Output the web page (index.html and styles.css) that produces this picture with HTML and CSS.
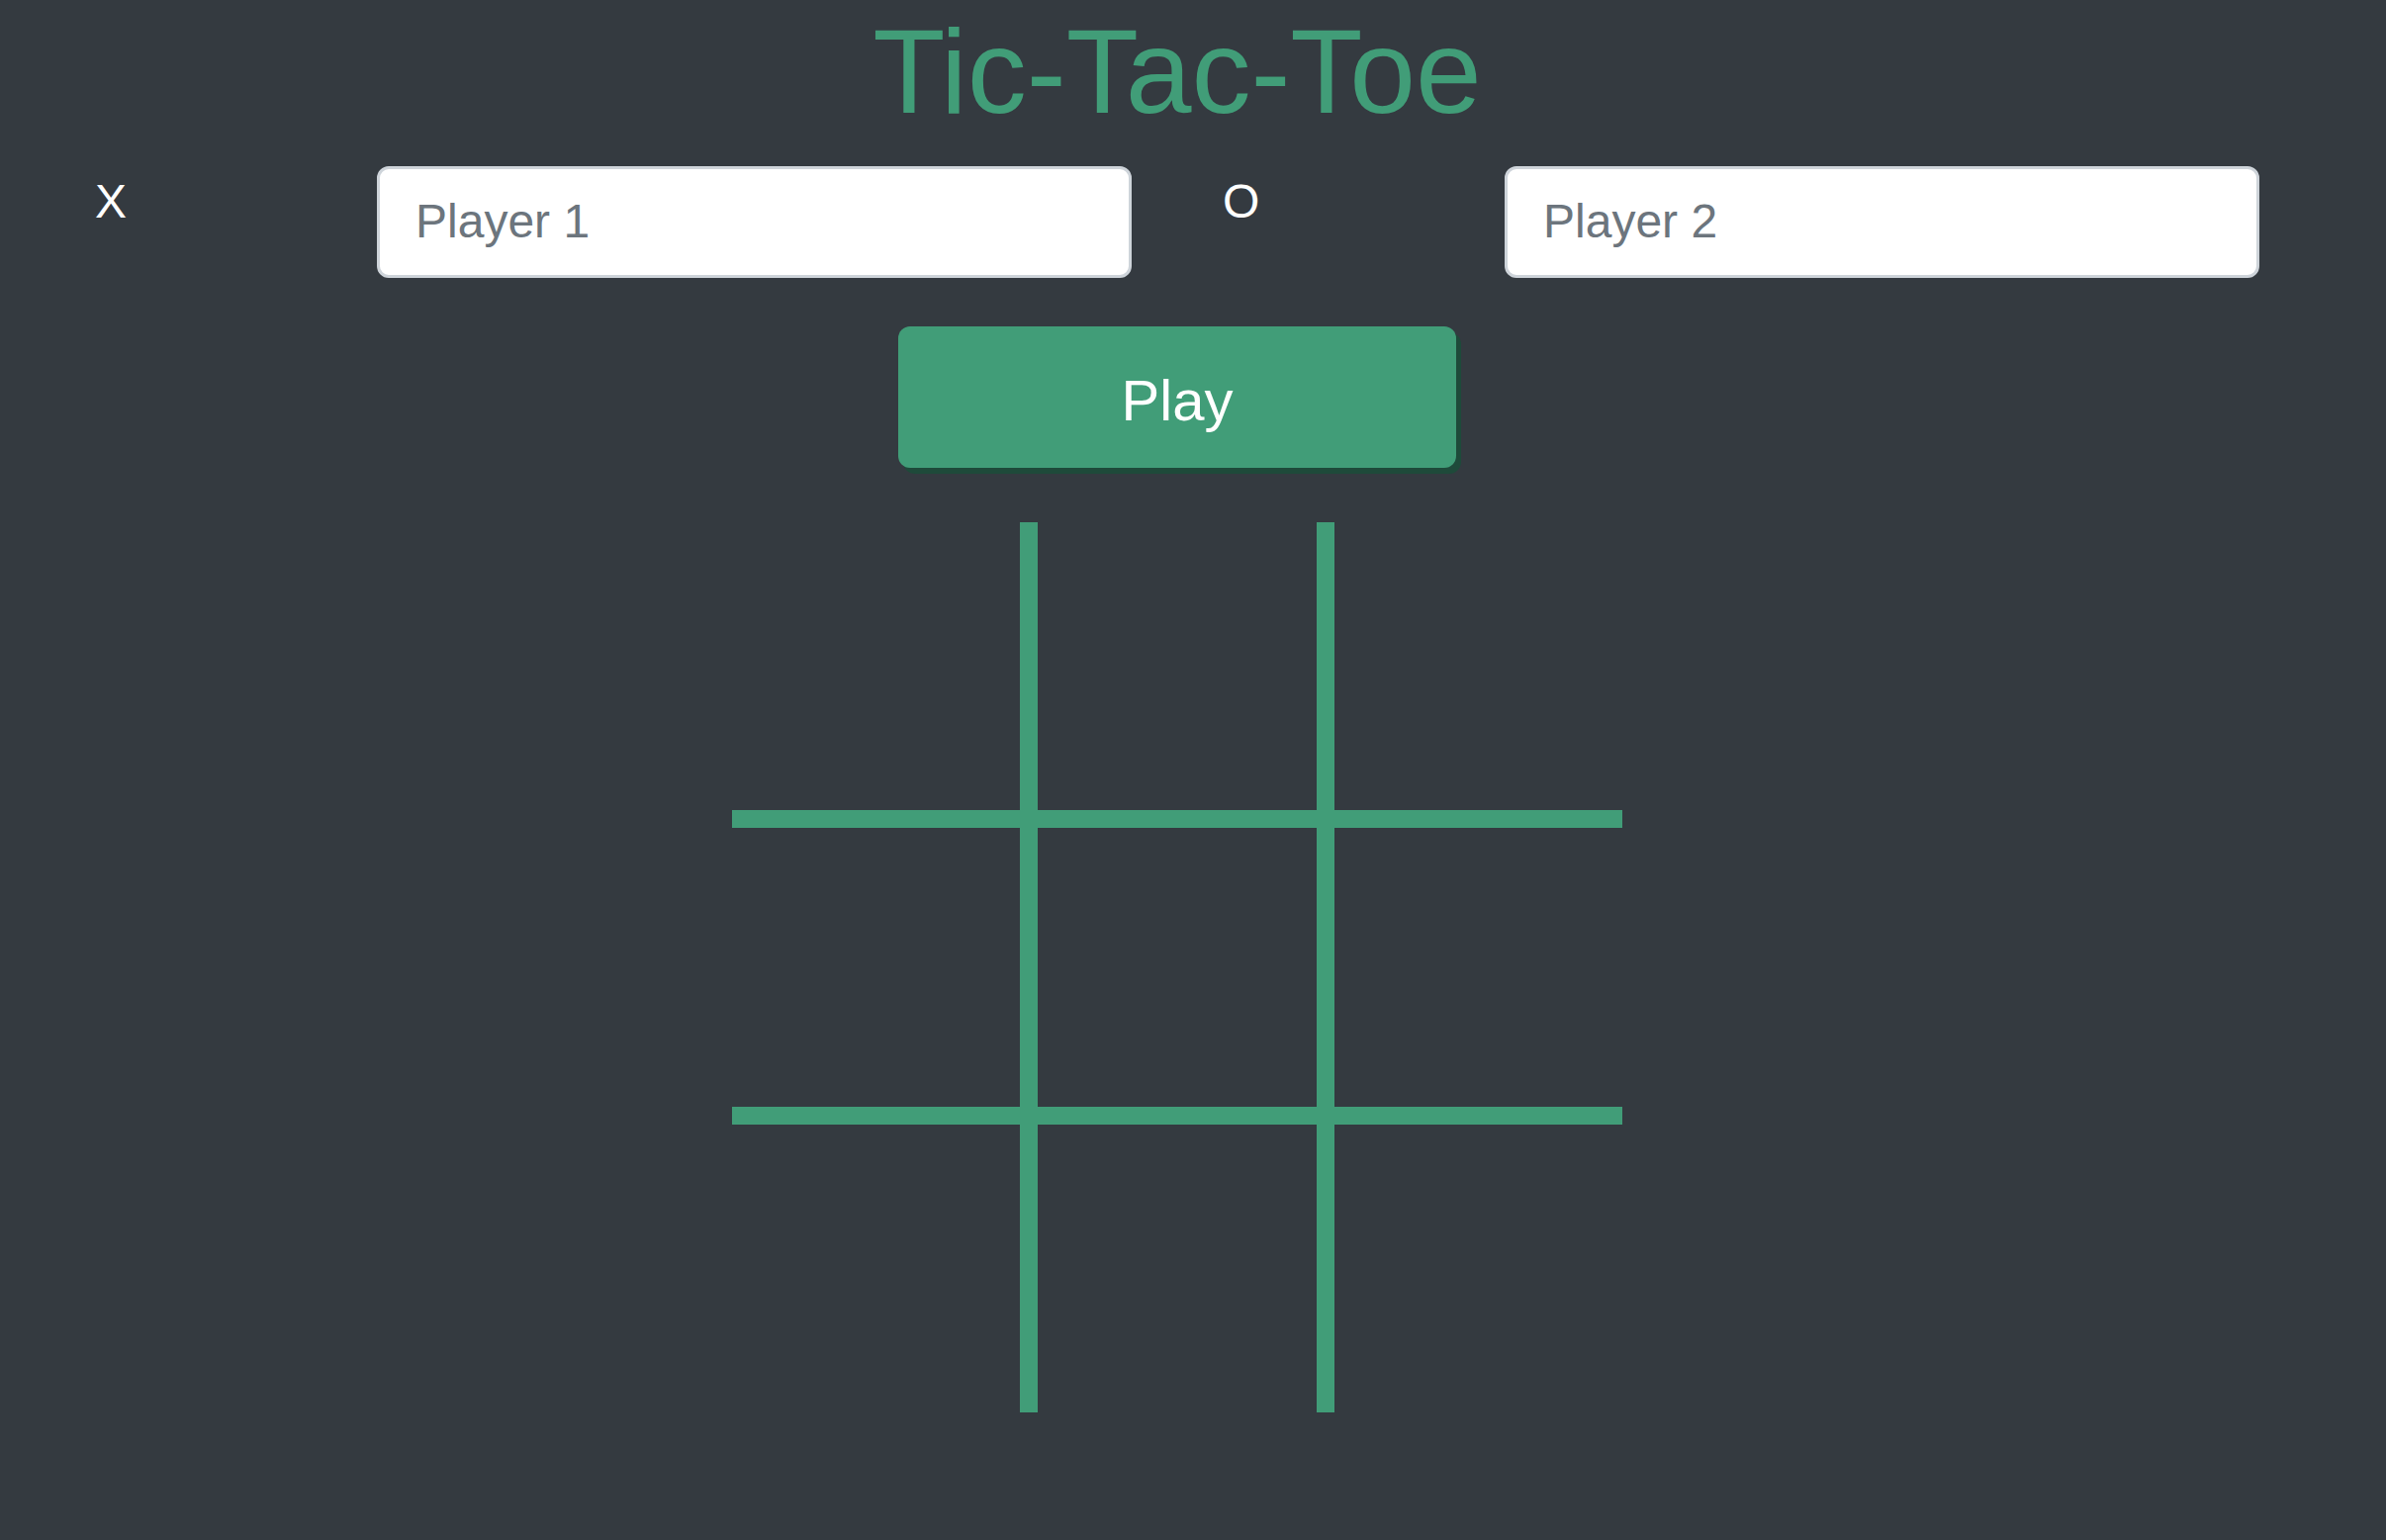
FILE: index.html
```html
<!DOCTYPE html>
<html lang="en">
<head>
<meta charset="utf-8">
<title>Tic-Tac-Toe</title>
<link rel="stylesheet" href="styles.css">
</head>
<body>
<main class="page">
  <h1 class="title">Tic-Tac-Toe</h1>
  <div class="players">
    <label class="mark" for="p1">X</label>
    <input class="name" id="p1" type="text" placeholder="Player 1">
    <label class="mark mark-o" for="p2">O</label>
    <input class="name" id="p2" type="text" placeholder="Player 2">
  </div>
  <div class="actions">
    <button class="play" type="button">Play</button>
  </div>
  <div class="board">
    <div class="cell"></div><div class="cell"></div><div class="cell"></div>
    <div class="cell"></div><div class="cell"></div><div class="cell"></div>
    <div class="cell"></div><div class="cell"></div><div class="cell"></div>
  </div>
</main>
</body>
</html>
```
FILE: styles.css
```css
html, body {
  margin: 0;
  background: #343a40;
}
body {
  font-family: "Liberation Sans", Arial, sans-serif;
}
.page {
  padding-right: 32px;
  min-height: 1557px;
  box-sizing: border-box;
}
.title {
  margin: 0;
  font-size: 120px;
  line-height: 144px;
  font-weight: 400;
  color: #419d78;
  text-align: center;
}
.players {
  display: flex;
  align-items: flex-start;
  margin-top: 24px;
  padding-left: 96px;
}
.mark {
  width: 285px;
  flex: none;
  font-size: 48px;
  line-height: 72px;
  color: #ffffff;
}
.mark-o {
  margin-left: 92px;
}
.name {
  flex: none;
  width: 763px;
  height: 113px;
  box-sizing: border-box;
  padding: 17px 36px 19px;
  border: 3px solid #ced4da;
  border-radius: 12px;
  background: #ffffff;
  font-family: "Liberation Sans", Arial, sans-serif;
  font-size: 48px;
  line-height: 72px;
  color: #495057;
  outline: none;
}
.name::placeholder {
  color: #6c757d;
  opacity: 1;
}
.actions {
  display: flex;
  justify-content: center;
  margin-top: 49px;
}
.play {
  width: 564px;
  height: 143px;
  padding: 6px 0 0;
  border: none;
  border-radius: 12px;
  background: #419d78;
  color: #ffffff;
  font-family: "Liberation Sans", Arial, sans-serif;
  font-size: 58px;
  box-shadow: 5px 6px 0 #1e4a3a;
  cursor: pointer;
}
.board {
  display: grid;
  grid-template-columns: repeat(3, 300px);
  grid-template-rows: repeat(3, 300px);
  justify-content: center;
  margin-top: 55px;
}
.cell {
  box-sizing: border-box;
  border: 0 solid #419d78;
}
.cell:nth-child(3n+1),
.cell:nth-child(3n+2) {
  border-right-width: 9px;
}
.cell:nth-child(3n+2),
.cell:nth-child(3n+3) {
  border-left-width: 9px;
}
.cell:nth-child(-n+6) {
  border-bottom-width: 9px;
}
.cell:nth-child(n+4) {
  border-top-width: 9px;
}
```
